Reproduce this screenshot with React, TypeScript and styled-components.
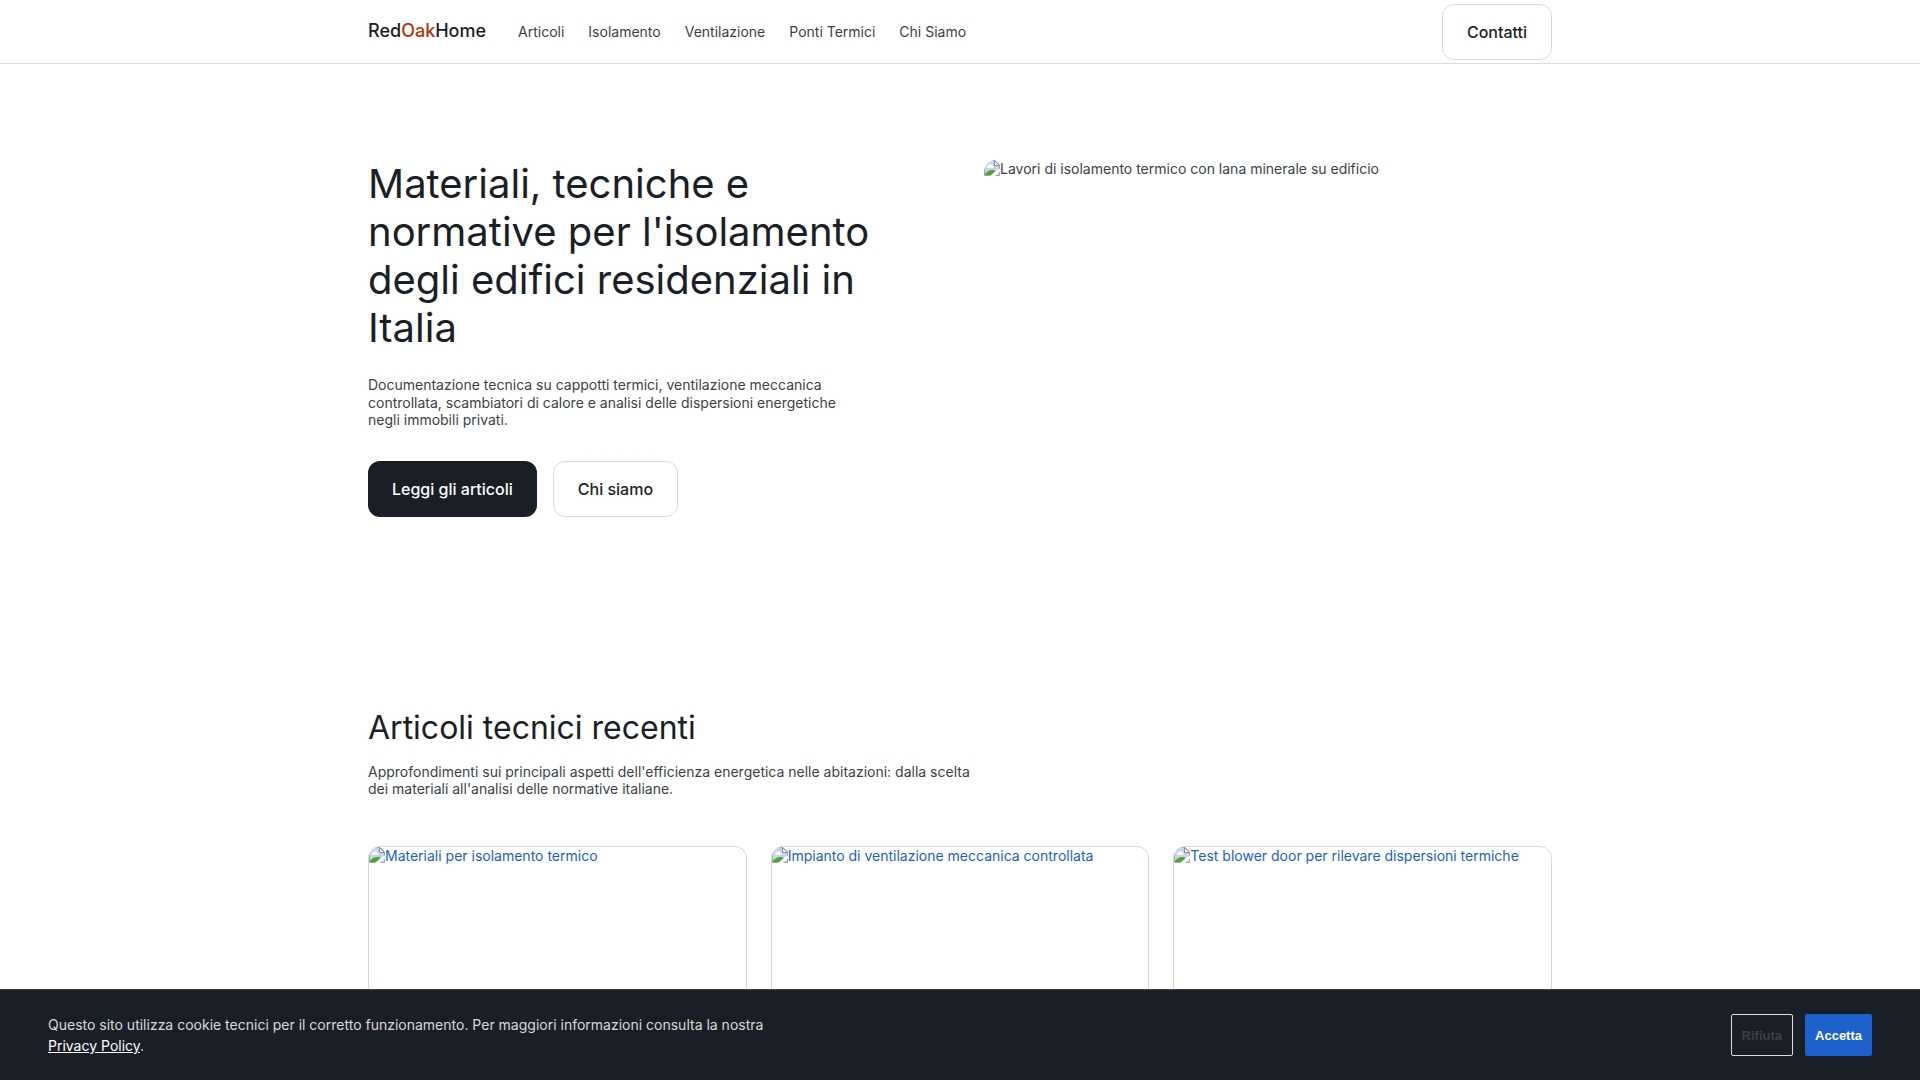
import React, { useState } from 'react';
import styled, { createGlobalStyle } from 'styled-components';

const ink = '#1a1e26';
const body = '#3b3f48';
const line = '#dadbdc';
const blue = '#1c60cb';

const GlobalStyle = createGlobalStyle`
  *, *::before, *::after { box-sizing: border-box; }
  body {
    margin: 0;
    background: #fff;
    color: ${body};
    font-family: Inter, sans-serif;
    font-size: 14px;
    line-height: 1.25;
  }
  h1, h2, p { margin: 0; font-weight: 400; }
  a { color: inherit; text-decoration: none; }
`;

const Container = styled.div`
  width: 100%;
  max-width: 1280px;
  margin: 0 auto;
  padding: 0 48px;
`;

const Header = styled.header`
  border-bottom: 1px solid ${line};
`;

const HeaderRow = styled(Container)`
  display: flex;
  align-items: center;
  height: 63px;
`;

const Logo = styled.a`
  margin-right: 32px;
  color: ${ink};
  font-size: 18px;
  font-weight: 500;
`;

const LogoAccent = styled.span`
  color: #b5330b;
`;

const Nav = styled.nav`
  display: flex;
  flex: 1;
  gap: 24px;
`;

const ButtonLink = styled.a<{ $solid?: boolean }>`
  display: inline-flex;
  align-items: center;
  padding: ${(p) => (p.$solid ? '18px 24px' : '17px 24px')};
  border: ${(p) => (p.$solid ? 'none' : `1px solid ${line}`)};
  border-radius: 12px;
  background: ${(p) => (p.$solid ? ink : '#fff')};
  color: ${(p) => (p.$solid ? '#fff' : ink)};
  font-size: 16px;
  font-weight: 500;
`;

const Section = styled.section`
  padding: 96px 0;
`;

const HeroGrid = styled(Container)`
  display: grid;
  grid-template-columns: 1fr 1fr;
  gap: 48px;
`;

const HeroTitle = styled.h1`
  color: ${ink};
  font-size: 40px;
  line-height: 48px;
`;

const HeroText = styled.p`
  max-width: 480px;
  margin: 24px 0 32px;
`;

const Actions = styled.div`
  display: flex;
  gap: 16px;
`;

const Picture = styled.div`
  display: flex;
  align-items: flex-start;
  overflow: hidden;
  border-radius: 12px;

  svg { flex: none; }
`;

const SectionTitle = styled.h2`
  color: ${ink};
  font-size: 32px;
  line-height: 38px;
`;

const SectionText = styled.p`
  max-width: 620px;
  margin: 16px 0 48px;
`;

const Cards = styled.div`
  display: grid;
  grid-template-columns: repeat(3, 1fr);
  gap: 24px;
`;

const Card = styled.a`
  display: block;
  overflow: hidden;
  border: 1px solid ${line};
  border-radius: 12px;
  color: ${blue};
`;

const CardPicture = styled(Picture)`
  min-height: 220px;
  border-radius: 0;
`;

const CookieBar = styled.aside`
  position: fixed;
  right: 0;
  bottom: 0;
  left: 0;
  display: flex;
  justify-content: space-between;
  gap: 24px;
  padding: 24px 48px;
  border-top: 1px solid ${body};
  background: ${ink};
  color: #dadbdc;
`;

const CookieText = styled.p`
  max-width: 720px;
  line-height: 21px;
`;

const PolicyLink = styled.a`
  color: #fff;
  text-decoration: underline;
`;

const CookieActions = styled.div`
  display: flex;
  gap: 12px;
`;

const CookieButton = styled.button<{ $primary?: boolean }>`
  padding: 0 10px;
  border: ${(p) => (p.$primary ? 'none' : `1px solid ${line}`)};
  border-radius: 2px;
  background: ${(p) => (p.$primary ? blue : 'transparent')};
  color: ${(p) => (p.$primary ? '#fff' : body)};
  font-family: "Liberation Sans", Arial, sans-serif;
  font-size: 13px;
  font-weight: 700;
  cursor: pointer;
`;

const MissingImage = () => (
  <svg width="16" height="16" viewBox="0 0 16 16" aria-hidden="true">
    <path d="M0.5 0.5H11L15.5 5V15.5H0.5Z" fill="#c4d6f6" stroke="#a3a3a3" />
    <path d="M3 7.5a1.5 1.5 0 0 1 1.5-2 2 2 0 0 1 3.700 0 1.200 1.200 0 0 1 0.300 2.500H4Z" fill="#fff" />
    <path d="M1 15V14C3 11.500 5.500 10 8 10c1.500 0 2.500 0 4 1L8 15Z" fill="#50a62c" />
    <path d="M10.500 0.500V5.500H15.500Z" fill="#fff" stroke="#8e8e8e" />
    <path d="M6 16L13 10L16 8.500V11.500L11 16Z" fill="#fff" />
  </svg>
);

const links = ['Articoli', 'Isolamento', 'Ventilazione', 'Ponti Termici', 'Chi Siamo'];

const articles = [
  'Materiali per isolamento termico',
  'Impianto di ventilazione meccanica controllata',
  'Test blower door per rilevare dispersioni termiche',
];

export default function App() {
  const [showCookies, setShowCookies] = useState(true);
  const dismiss = () => setShowCookies(false);

  return (
    <>
      <GlobalStyle />
      <Header>
        <HeaderRow>
          <Logo href="#">
            Red<LogoAccent>Oak</LogoAccent>Home
          </Logo>
          <Nav>
            {links.map((label) => (
              <a key={label} href="#">{label}</a>
            ))}
          </Nav>
          <ButtonLink href="#">Contatti</ButtonLink>
        </HeaderRow>
      </Header>
      <main>
        <Section>
          <HeroGrid>
            <div>
              <HeroTitle>
                Materiali, tecniche e normative per l'isolamento degli edifici residenziali in Italia
              </HeroTitle>
              <HeroText>
                Documentazione tecnica su cappotti termici, ventilazione meccanica controllata,
                scambiatori di calore e analisi delle dispersioni energetiche negli immobili privati.
              </HeroText>
              <Actions>
                <ButtonLink $solid href="#">Leggi gli articoli</ButtonLink>
                <ButtonLink href="#">Chi siamo</ButtonLink>
              </Actions>
            </div>
            <Picture>
              <MissingImage />
              <span>Lavori di isolamento termico con lana minerale su edificio</span>
            </Picture>
          </HeroGrid>
        </Section>
        <Section>
          <Container>
            <SectionTitle>Articoli tecnici recenti</SectionTitle>
            <SectionText>
              Approfondimenti sui principali aspetti dell'efficienza energetica nelle abitazioni:
              dalla scelta dei materiali all'analisi delle normative italiane.
            </SectionText>
            <Cards>
              {articles.map((title) => (
                <Card key={title} href="#">
                  <CardPicture>
                    <MissingImage />
                    <span>{title}</span>
                  </CardPicture>
                </Card>
              ))}
            </Cards>
          </Container>
        </Section>
      </main>
      {showCookies && (
        <CookieBar>
          <CookieText>
            Questo sito utilizza cookie tecnici per il corretto funzionamento. Per maggiori
            informazioni consulta la nostra <PolicyLink href="#">Privacy Policy</PolicyLink>.
          </CookieText>
          <CookieActions>
            <CookieButton type="button" onClick={dismiss}>Rifiuta</CookieButton>
            <CookieButton type="button" $primary onClick={dismiss}>Accetta</CookieButton>
          </CookieActions>
        </CookieBar>
      )}
    </>
  );
}
